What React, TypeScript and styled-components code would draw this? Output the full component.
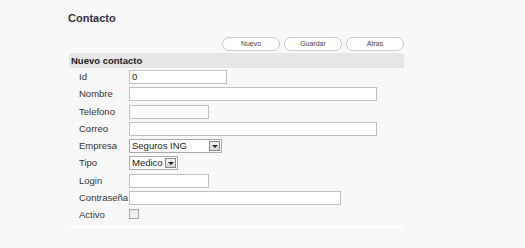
import React from 'react'
import styled, { createGlobalStyle } from 'styled-components'

const GlobalStyle = createGlobalStyle`
  html, body {
    margin: 0;
    padding: 0;
    background: #f8f8f8;
    font-family: 'Liberation Sans', Arial, sans-serif;
  }
`

type Field = {
  label: string
  kind: 'text' | 'select' | 'check'
  width?: number
  value?: string
}

const fields: Field[] = [
  { label: 'Id', kind: 'text', width: 98, value: '0' },
  { label: 'Nombre', kind: 'text', width: 248 },
  { label: 'Telefono', kind: 'text', width: 80 },
  { label: 'Correo', kind: 'text', width: 248 },
  { label: 'Empresa', kind: 'select', width: 93, value: 'Seguros ING' },
  { label: 'Tipo', kind: 'select', width: 49, value: 'Medico' },
  { label: 'Login', kind: 'text', width: 80 },
  { label: 'Contraseña', kind: 'text', width: 212 },
  { label: 'Activo', kind: 'check' },
]

const App = () => {
  return (
    <>
      <GlobalStyle />
      <Page>
        <Title>Contacto</Title>
        <Toolbar>
          <Button>Nuevo</Button>
          <Button>Guardar</Button>
          <Button>Atras</Button>
        </Toolbar>
        <Panel>
          <PanelHeader>Nuevo contacto</PanelHeader>
          <Form>
            {fields.map((f) => (
              <Row key={f.label}>
                <Label>{f.label}</Label>
                {f.kind === 'text' && (
                  <TextBox $width={f.width ?? 100}>{f.value}</TextBox>
                )}
                {f.kind === 'select' && (
                  <Select $width={f.width ?? 100}>
                    <SelectValue>{f.value}</SelectValue>
                    <Arrow>
                      <svg width="6" height="3" viewBox="0 0 6 3">
                        <path d="M0 0h6L3 3z" fill="#222" />
                      </svg>
                    </Arrow>
                  </Select>
                )}
                {f.kind === 'check' && <Check />}
              </Row>
            ))}
          </Form>
          <PanelFooter />
        </Panel>
      </Page>
    </>
  )
}

export default App

const Page = styled.div`
  width: 337px;
  padding: 11px 0 0 67px;
`

const Title = styled.h1`
  margin: 0 0 0 1px;
  font-size: 11px;
  line-height: 14px;
  font-weight: bold;
  color: #34303a;
`

const Toolbar = styled.div`
  display: flex;
  justify-content: flex-end;
  gap: 4px;
  margin-top: 12px;
`

const Button = styled.div`
  width: 58px;
  height: 14px;
  box-sizing: border-box;
  border: 1px solid #c9c9c9;
  border-radius: 8px;
  background: #ffffff;
  font-size: 7px;
  line-height: 12px;
  text-align: center;
  color: #444;
`

const Panel = styled.div`
  margin: 2px 0 0 2px;
`

const PanelHeader = styled.div`
  height: 15px;
  padding-left: 2px;
  border-radius: 3px 3px 0 0;
  background: #e6e6e6;
  font-size: 9.5px;
  line-height: 15px;
  font-weight: bold;
  color: #222;
`

const Form = styled.div`
  display: flex;
  flex-direction: column;
  padding: 2px 0 0 10px;
`

const Row = styled.div`
  display: flex;
  align-items: flex-start;
  height: 17.3px;
`

const Label = styled.div`
  width: 50px;
  font-size: 9.5px;
  line-height: 14px;
  color: #333;
  white-space: nowrap;
`

const TextBox = styled.div<{ $width: number }>`
  width: ${({ $width }) => $width}px;
  height: 14px;
  box-sizing: border-box;
  border: 1px solid #c0c0c0;
  background: #fff;
  font-size: 9.5px;
  line-height: 12px;
  padding-left: 2px;
  color: #222;
`

const Select = styled.div<{ $width: number }>`
  display: flex;
  width: ${({ $width }) => $width}px;
  height: 14px;
  box-sizing: border-box;
  border: 1px solid #a9a9a9;
  background: #fff;
`

const SelectValue = styled.div`
  flex: 1;
  padding-left: 2px;
  font-size: 9.5px;
  line-height: 12px;
  color: #222;
  white-space: nowrap;
  overflow: hidden;
`

const Arrow = styled.div`
  display: flex;
  align-items: center;
  justify-content: center;
  width: 9px;
  margin: 1px;
  border: 1px solid #8a8a8a;
  background: linear-gradient(#f2f2f2, #d6d6d6);
`

const Check = styled.div`
  width: 8px;
  height: 8px;
  margin-top: 1px;
  border: 1px solid #a6a6a6;
  background: linear-gradient(#e8e8e8, #fafafa);
`

const PanelFooter = styled.div`
  height: 3px;
  margin: -1px 0 0 1px;
  border-radius: 2px;
  background: #ffffff;
  box-shadow: 0 0 1px #ececec;
`
